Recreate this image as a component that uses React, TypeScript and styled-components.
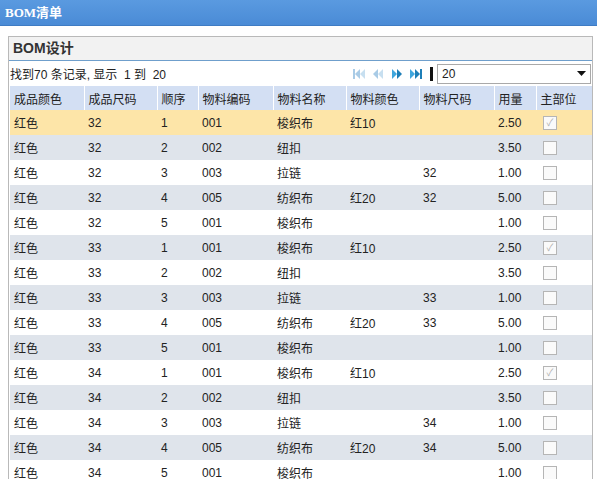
import React from "react";
import styled, { createGlobalStyle } from "styled-components";

const GlobalStyle = createGlobalStyle`
  body {
    margin: 0;
    background: #fff;
    font-family: "Liberation Sans", "Noto Sans CJK SC", sans-serif;
    font-size: 12px;
    color: #222;
    overflow: hidden;
  }
`;

const TopBar = styled.div`
  height: 25px;
  background: linear-gradient(#5a9ae0, #4a8bd6);
  color: #fff;
  font-family: "Liberation Serif", "Noto Sans CJK SC", serif;
  font-weight: bold;
  font-size: 13px;
  line-height: 25px;
  padding-left: 5px;
  border-bottom: 1px solid #3f7cc4;
`;

const Panel = styled.div`
  margin: 10px 4px 0 8px;
  border: 1px solid #b9b9b9;
  border-bottom: none;
  height: 460px;
  overflow: hidden;
`;

const PanelTitle = styled.div`
  height: 23px;
  line-height: 23px;
  background: #f2f2f2;
  border-bottom: 1px solid #6f9fcc;
  padding-left: 4px;
  font-weight: bold;
  font-size: 14px;
  color: #333;
`;

const Toolbar = styled.div`
  display: flex;
  align-items: center;
  height: 25px;
  padding-left: 1px;
`;

const Info = styled.div`
  flex: 1;
  white-space: pre;
`;

const Pager = styled.div`
  display: flex;
  align-items: center;
  gap: 5px;
  margin-right: 5px;
`;

const Sep = styled.div`
  width: 3px;
  height: 14px;
  background: #111;
  margin: 0 4px 0 2px;
`;

const Select = styled.div`
  width: 154px;
  height: 20px;
  border: 1px solid #a9a9a9;
  display: flex;
  align-items: center;
  justify-content: space-between;
  padding: 0 4px 0 4px;
  box-sizing: border-box;
  margin-right: 1px;
`;

const Table = styled.table`
  border-collapse: collapse;
  table-layout: fixed;
  width: 583px;
  margin-left: 1px;
`;

const Th = styled.th<{ $w: number }>`
  box-sizing: border-box;
  width: ${(p) => p.$w}px;
  height: 24px;
  background: #d3dff3;
  font-weight: normal;
  text-align: left;
  padding: 0 3px 0 4px;
  border-left: 1px solid #fff;
  white-space: nowrap;
  &:first-child {
    border-left: none;
  }
`;

const Tr = styled.tr<{ $bg: string }>`
  background: ${(p) => p.$bg};
`;

const Td = styled.td`
  height: 25px;
  padding: 0 4px;
  white-space: nowrap;
  overflow: hidden;
`;

const Box = styled.span<{ $on: boolean }>`
  display: inline-block;
  width: 12px;
  height: 12px;
  border: 1px solid #b5b5b5;
  background: #fafafa;
  margin-left: 3px;
  vertical-align: middle;
  color: #b0b0b0;
  font-size: 10px;
  line-height: 12px;
  text-align: center;
`;

const PagerIcon = ({ kind, on }: { kind: "first" | "prev" | "next" | "last"; on: boolean }) => {
  const c = on ? "#1e7fb8" : "#a9cbe6";
  const c2 = on ? "#3fa6dd" : "#c7dff0";
  return (
    <svg width="14" height="12" viewBox="0 0 14 12">
      {kind === "first" && (
        <>
          <rect x="1" y="1" width="2" height="10" fill={c} />
          <polygon points="8,1 3,6 8,11" fill={c} />
          <polygon points="13,1 8,6 13,11" fill={c2} />
        </>
      )}
      {kind === "prev" && (
        <>
          <polygon points="7,1 2,6 7,11" fill={c} />
          <polygon points="12,1 7,6 12,11" fill={c2} />
        </>
      )}
      {kind === "next" && (
        <>
          <polygon points="2,1 7,6 2,11" fill={c2} />
          <polygon points="7,1 12,6 7,11" fill={c} />
        </>
      )}
      {kind === "last" && (
        <>
          <polygon points="1,1 6,6 1,11" fill={c2} />
          <polygon points="6,1 11,6 6,11" fill={c} />
          <rect x="11" y="1" width="2" height="10" fill={c} />
        </>
      )}
    </svg>
  );
};

const cols = [
  { t: "成品颜色", w: 74 },
  { t: "成品尺码", w: 73 },
  { t: "顺序", w: 41 },
  { t: "物料编码", w: 75 },
  { t: "物料名称", w: 73 },
  { t: "物料颜色", w: 73 },
  { t: "物料尺码", w: 75 },
  { t: "用量", w: 42 },
  { t: "主部位", w: 57 },
];

const parts = [
  { seq: "1", code: "001", name: "梭织布", color: "红10", size: false, qty: "2.50", main: true },
  { seq: "2", code: "002", name: "纽扣", color: "", size: false, qty: "3.50", main: false },
  { seq: "3", code: "003", name: "拉链", color: "", size: true, qty: "1.00", main: false },
  { seq: "4", code: "005", name: "纺织布", color: "红20", size: true, qty: "5.00", main: false },
  { seq: "5", code: "001", name: "梭织布", color: "", size: false, qty: "1.00", main: false },
];

const rows = ["32", "33", "34"].flatMap((s) => parts.map((p) => ({ ...p, s })));

export default function App() {
  return (
    <>
      <GlobalStyle />
      <TopBar>BOM清单</TopBar>
      <Panel>
        <PanelTitle>BOM设计</PanelTitle>
        <Toolbar>
          <Info>找到70 条记录, 显示  1 到  20</Info>
          <Pager>
            <PagerIcon kind="first" on={false} />
            <PagerIcon kind="prev" on={false} />
            <PagerIcon kind="next" on />
            <PagerIcon kind="last" on />
          </Pager>
          <Sep />
          <Select>
            <span>20</span>
            <svg width="9" height="5" viewBox="0 0 9 5">
              <polygon points="0,0 9,0 4.5,5" fill="#111" />
            </svg>
          </Select>
        </Toolbar>
        <Table>
          <thead>
            <tr>
              {cols.map((c) => (
                <Th key={c.t} $w={c.w}>
                  {c.t}
                </Th>
              ))}
            </tr>
          </thead>
          <tbody>
            {rows.map((r, i) => (
              <Tr key={i} $bg={i === 0 ? "#fde5a8" : i % 2 === 1 ? "#dfe4eb" : "#fff"}>
                <Td>红色</Td>
                <Td>{r.s}</Td>
                <Td>{r.seq}</Td>
                <Td>{r.code}</Td>
                <Td>{r.name}</Td>
                <Td>{r.color}</Td>
                <Td>{r.size ? r.s : ""}</Td>
                <Td>{r.qty}</Td>
                <Td>
                  <Box $on={r.main}>{r.main ? "✓" : ""}</Box>
                </Td>
              </Tr>
            ))}
          </tbody>
        </Table>
      </Panel>
    </>
  );
}
